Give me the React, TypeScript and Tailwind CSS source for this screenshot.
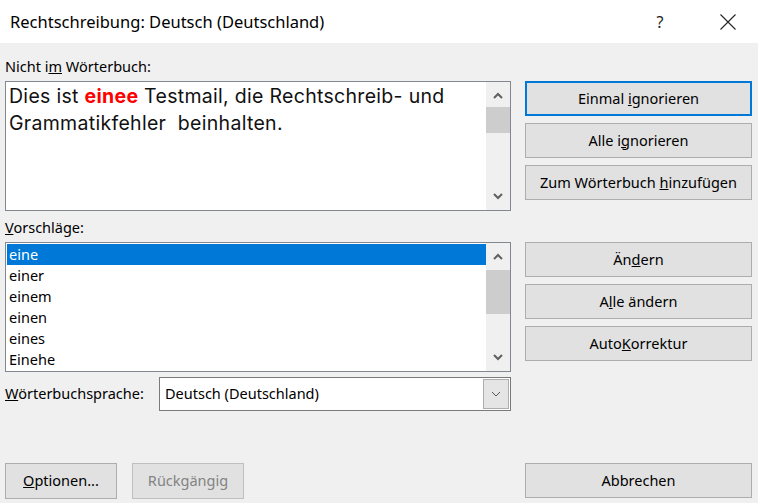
import React from "react";

const ui = "font-['Noto_Sans','Liberation_Sans',sans-serif]";

function Chevron({ up, className = "" }: { up?: boolean; className?: string }) {
  return (
    <svg width="10" height="7" viewBox="0 0 10 7" className={className}>
      <polyline
        points={up ? "1,6 5,2 9,6" : "1,1 5,5 9,1"}
        fill="none"
        stroke="#606060"
        strokeWidth="2"
      />
    </svg>
  );
}

function ScrollBar({ thumbTop, thumbHeight }: { thumbTop: number; thumbHeight: number }) {
  return (
    <div className="relative w-[24px] h-full bg-[#f0f0f0] shrink-0">
      <div className="absolute top-[10px] left-[7px]">
        <Chevron up />
      </div>
      <div
        className="absolute left-0 w-[24px] bg-[#cdcdcd]"
        style={{ top: thumbTop, height: thumbHeight }}
      />
      <div className="absolute bottom-[10px] left-[7px]">
        <Chevron />
      </div>
    </div>
  );
}

function Btn({
  children,
  focused,
  disabled,
  className = "",
}: {
  children: React.ReactNode;
  focused?: boolean;
  disabled?: boolean;
  className?: string;
}) {
  return (
    <div
      className={
        "h-[35px] flex items-center justify-center text-[14.5px] bg-[#e1e1e1] " +
        (focused
          ? "border-2 border-[#0078d7] text-black "
          : disabled
          ? "border border-[#bfbfbf] text-[#838383] "
          : "border border-[#adadad] text-black ") +
        className
      }
    >
      <span>{children}</span>
    </div>
  );
}

const suggestions = ["eine", "einer", "einem", "einen", "eines", "Einehe"];

export default function App() {
  return (
    <div className={"w-[758px] h-[503px] bg-[#f0f0f0] flex flex-col overflow-hidden " + ui}>
      {/* title bar */}
      <div className="h-[43px] bg-white flex items-center shrink-0">
        <div className="pl-[10px] pt-[1px] text-[16.5px] text-black flex-1">
          Rechtschreibung: Deutsch (Deutschland)
        </div>
        <div className="w-[20px] text-[16px] text-[#222] mr-[50px] text-center">?</div>
        <svg width="16" height="16" viewBox="0 0 16 16" className="mr-[22px]">
          <path d="M0.5 0.5 L15.5 15.5 M15.5 0.5 L0.5 15.5" stroke="#222" strokeWidth="1.1" />
        </svg>
      </div>

      <div className="flex flex-1">
        {/* left column */}
        <div className="ml-[5px] w-[506px] flex flex-col text-[14.5px] text-black">
          <div className="mt-[13px] leading-[20px]">
            Nicht i<u>m</u> Wörterbuch:
          </div>
          <div className="mt-[5px] h-[130px] border border-[#828790] bg-white flex">
            <div className="flex-1 pl-[3px] pt-[1px] text-[19.5px] leading-[27px] tracking-[0.3px] font-['Inter','Noto_Sans',sans-serif] text-[#111]">
              Dies ist <span className="text-[#ff0000] font-bold">einee</span> Testmail, die
              Rechtschreib- und
              <br />
              Grammatikfehler&nbsp; beinhalten.
            </div>
            <ScrollBar thumbTop={25} thumbHeight={26} />
          </div>

          <div className="mt-[6px] leading-[20px]">
            <u>V</u>orschläge:
          </div>
          <div className="mt-[5px] h-[130px] border border-[#828790] bg-white flex">
            <div className="flex-1 pt-[1px] pl-[1px]">
              {suggestions.map((s, i) => (
                <div
                  key={s}
                  className={
                    "h-[21px] leading-[21px] pl-[2px] " +
                    (i === 0 ? "bg-[#0078d7] text-white" : "text-black")
                  }
                >
                  {s}
                </div>
              ))}
            </div>
            <ScrollBar thumbTop={27} thumbHeight={44} />
          </div>

          <div className="mt-[5px] flex items-center">
            <div className="w-[154px]">
              <u>W</u>örterbuchsprache:
            </div>
            <div className="h-[34px] flex-1 border border-[#7a7a7a] bg-white flex items-center">
              <div className="flex-1 pl-[5px]">Deutsch (Deutschland)</div>
              <div className="w-[26px] h-[30px] mr-[1px] bg-[#e5e5e5] border border-[#adadad] flex items-center justify-center">
                <svg width="10" height="6" viewBox="0 0 10 6">
                  <polyline points="1,1 5,5 9,1" fill="none" stroke="#555" strokeWidth="1" />
                </svg>
              </div>
            </div>
          </div>

          <div className="mt-[52px] flex gap-[15px]">
            <Btn className="w-[112px] h-[36px]">
              <u>O</u>ptionen...
            </Btn>
            <Btn disabled className="w-[112px] h-[36px]">
              Rückgängig
            </Btn>
          </div>
        </div>

        {/* right column */}
        <div className="ml-[14px] w-[227px] flex flex-col">
          <div className="mt-[38px] flex flex-col gap-[7px]">
            <Btn focused>
              Einmal <u>i</u>gnorieren
            </Btn>
            <Btn>
              Alle i<u>g</u>norieren
            </Btn>
            <Btn>
              Zum Wörterbuch <u>h</u>inzufügen
            </Btn>
          </div>
          <div className="mt-[42px] flex flex-col gap-[7px]">
            <Btn>
              Än<u>d</u>ern
            </Btn>
            <Btn>
              A<u>l</u>le ändern
            </Btn>
            <Btn>
              Auto<u>K</u>orrektur
            </Btn>
          </div>
          <div className="mt-[102px]">
            <Btn>Abbrechen</Btn>
          </div>
        </div>
      </div>
    </div>
  );
}
